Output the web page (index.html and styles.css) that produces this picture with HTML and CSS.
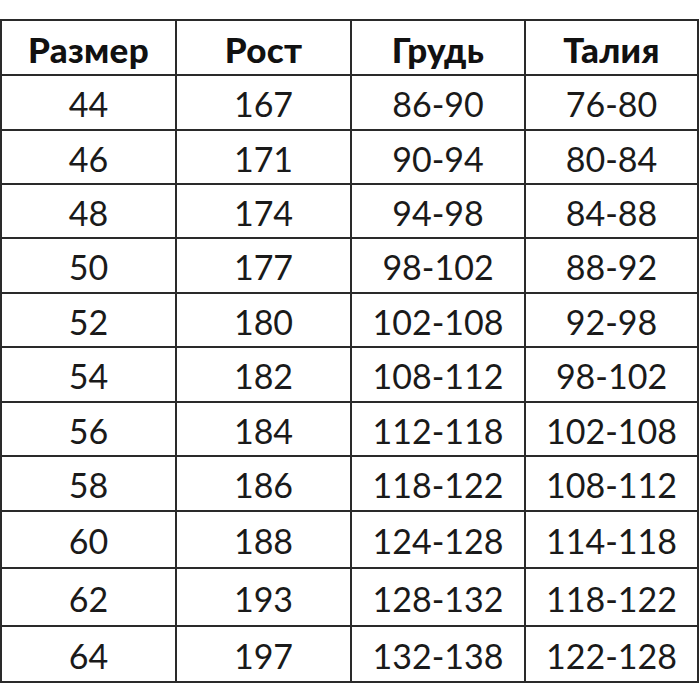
FILE: index.html
```html
<!DOCTYPE html>
<html lang="ru">
<head>
<meta charset="utf-8">
<link rel="stylesheet" href="styles.css">
</head>
<body>
<table class="sizes">
  <colgroup>
    <col class="c1"><col class="c2"><col class="c3"><col class="c4">
  </colgroup>
  <thead>
    <tr class="r0"><th>Размер</th><th>Рост</th><th>Грудь</th><th>Талия</th></tr>
  </thead>
  <tbody>
    <tr class="r1"><td>44</td><td>167</td><td>86-90</td><td>76-80</td></tr>
    <tr class="r2"><td>46</td><td>171</td><td>90-94</td><td>80-84</td></tr>
    <tr class="r3"><td>48</td><td>174</td><td>94-98</td><td>84-88</td></tr>
    <tr class="r4"><td>50</td><td>177</td><td>98-102</td><td>88-92</td></tr>
    <tr class="r5"><td>52</td><td>180</td><td>102-108</td><td>92-98</td></tr>
    <tr class="r6"><td>54</td><td>182</td><td>108-112</td><td>98-102</td></tr>
    <tr class="r7"><td>56</td><td>184</td><td>112-118</td><td>102-108</td></tr>
    <tr class="r8"><td>58</td><td>186</td><td>118-122</td><td>108-112</td></tr>
    <tr class="r9"><td>60</td><td>188</td><td>124-128</td><td>114-118</td></tr>
    <tr class="r10"><td>62</td><td>193</td><td>128-132</td><td>118-122</td></tr>
    <tr class="r11"><td>64</td><td>197</td><td>132-138</td><td>122-128</td></tr>
  </tbody>
</table>
</body>
</html>
```
FILE: styles.css
```css
html, body {
  margin: 0;
  padding: 0;
  background: #ffffff;
}
body {
  padding-top: 19px;
  font-family: Lato, "Open Sans", "Liberation Sans", sans-serif;
  color: #1a1a1a;
}
.sizes {
  border-collapse: collapse;
  table-layout: fixed;
  width: 697px;
  margin-left: 0;
  border: 2px solid #2a2a2a;
}
.c1 { width: 175px; }
.c2 { width: 175px; }
.c3 { width: 174px; }
.c4 { width: 173px; }
.sizes th, .sizes td {
  border: 2px solid #2a2a2a;
  padding: 3px 0 0 0;
  text-align: center;
  vertical-align: middle;
  line-height: 1;
}
.sizes th {
  font-size: 35px;
  font-weight: 900;
  letter-spacing: 0.3px;
  color: #111;
}
.sizes td {
  font-size: 34px;
  font-weight: 400;
}
.r0 { height: 55px; }
.r1 { height: 55px; }
.r2 { height: 54px; }
.r3 { height: 54px; }
.r4 { height: 55px; }
.r5 { height: 54px; }
.r6 { height: 55px; }
.r7 { height: 54px; }
.r8 { height: 55px; }
.r9 { height: 57px; }
.r10 { height: 58px; }
.r11 { height: 56px; }
```
